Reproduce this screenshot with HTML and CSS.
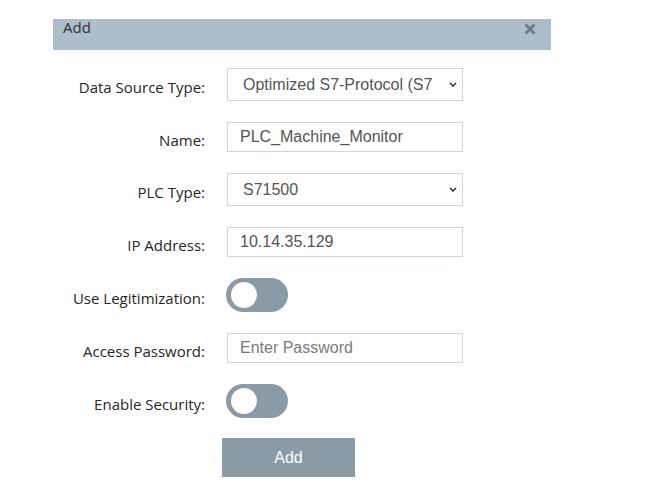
FILE: index.html
```html
<!DOCTYPE html>
<html>
<head>
<meta charset="utf-8">
<link rel="stylesheet" href="styles.css">
</head>
<body>
<div class="dialog">
  <div class="header">
    <span class="title">Add</span>
    <svg class="close" width="12" height="12" viewBox="0 0 12 12"><path d="M1.5 1.5 L10.5 10.5 M10.5 1.5 L1.5 10.5" stroke="#6d7a85" stroke-width="2.8" stroke-linecap="butt"/></svg>
  </div>
  <div class="form">
    <label class="label">Data Source Type:</label>
    <div class="select-wrap">
      <select class="select"><option>Optimized S7-Protocol (S7-1200/1500)</option></select>
      <svg class="chev" width="8" height="5" viewBox="0 0 8 5"><path d="M1 1 L4 4 L7 1" fill="none" stroke="#333" stroke-width="1.5"/></svg>
    </div>

    <label class="label">Name:</label>
    <input class="input" type="text" value="PLC_Machine_Monitor">

    <label class="label">PLC Type:</label>
    <div class="select-wrap">
      <select class="select"><option>S71500</option></select>
      <svg class="chev" width="8" height="5" viewBox="0 0 8 5"><path d="M1 1 L4 4 L7 1" fill="none" stroke="#333" stroke-width="1.5"/></svg>
    </div>

    <label class="label">IP Address:</label>
    <input class="input" type="text" value="10.14.35.129">

    <label class="label">Use Legitimization:</label>
    <div class="toggle"><span class="knob"></span></div>

    <label class="label">Access Password:</label>
    <input class="input" type="password" placeholder="Enter Password">

    <label class="label">Enable Security:</label>
    <div class="toggle"><span class="knob"></span></div>
  </div>
  <div class="actions">
    <button class="btn">Add</button>
  </div>
</div>
</body>
</html>
```

FILE: styles.css
```css
html, body {
  margin: 0;
  padding: 0;
  background: #ffffff;
}

.dialog {
  width: 498px;
  margin: 19px 0 0 53px;
}

.header {
  height: 31px;
  background: #adbecb;
  display: flex;
  justify-content: space-between;
  align-items: flex-start;
  padding: 0 15px 0 10px;
  box-sizing: border-box;
}

.title {
  font-family: "Open Sans", sans-serif;
  font-size: 15px;
  line-height: 16px;
  color: #333;
}

.close {
  margin-top: 4px;
}

.form {
  display: grid;
  grid-template-columns: 152px 236px;
  column-gap: 22px;
  row-gap: 21px;
  padding-top: 18px;
  align-items: center;
}

.label {
  font-family: "Open Sans", sans-serif;
  font-size: 15px;
  color: #262626;
  text-align: right;
  padding-top: 5px;
  white-space: nowrap;
}

.select-wrap {
  position: relative;
  height: 33px;
}

.select {
  appearance: none;
  -webkit-appearance: none;
  width: 236px;
  height: 33px;
  box-sizing: border-box;
  border: 1px solid #cbd5dc;
  border-radius: 0;
  background: #fff;
  padding: 0 30px 0 15px;
  font-family: "Liberation Sans", Arial, sans-serif;
  font-size: 16px;
  color: #555;
  outline: none;
}

.chev {
  position: absolute;
  right: 6px;
  top: 14px;
  pointer-events: none;
}

.input {
  width: 236px;
  height: 30px;
  box-sizing: border-box;
  border: 1px solid #cbd5dc;
  border-radius: 0;
  padding: 0 12px;
  font-family: "Liberation Sans", Arial, sans-serif;
  font-size: 16px;
  color: #555;
  outline: none;
  margin: 0;
}

.input::placeholder {
  color: #7a7a7a;
}

.toggle {
  width: 62px;
  height: 34px;
  border-radius: 17px;
  background: #8a9aa6;
  display: flex;
  align-items: center;
  padding-left: 5px;
  box-sizing: border-box;
  margin-left: -1px;
}

.knob {
  width: 26px;
  height: 26px;
  border-radius: 50%;
  background: #fff;
}

.actions {
  padding: 20px 0 0 169px;
}

.btn {
  width: 133px;
  height: 39px;
  border: none;
  border-radius: 0;
  background: #8a9ba8;
  color: #fff;
  font-family: "Liberation Sans", Arial, sans-serif;
  font-size: 16px;
  padding: 0;
  margin: 0;
}
```
